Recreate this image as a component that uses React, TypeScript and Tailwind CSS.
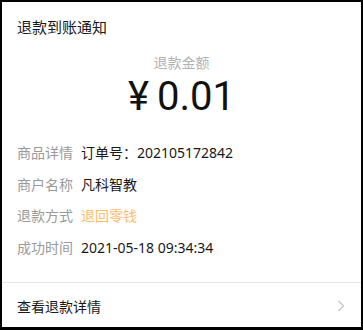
export default function App() {
  const rows = [
    { label: "商品详情", value: "订单号：202105172842", tone: "text-[#191919]" },
    { label: "商户名称", value: "凡科智教", tone: "text-[#191919]" },
    { label: "退款方式", value: "退回零钱", tone: "text-[#fbbd6a]" },
    { label: "成功时间", value: "2021-05-18 09:34:34", tone: "text-[#191919]" },
  ];

  return (
    <div className="w-[363px] h-[330px] bg-black pt-[2px] pl-[2px] pr-[2px] pb-[3px] font-['Noto_Sans','Noto_Sans_CJK_SC',sans-serif]">
      <div className="w-[359px] h-[325px] bg-white flex flex-col">
        <div className="mt-[15px] px-[15px] text-[15px] leading-[21px] text-[#191919]">退款到账通知</div>

        <div className="mt-[15px] text-center text-[14px] leading-[20px] text-[#b2b2b2]">退款金额</div>
        <div className="mt-[2px] text-center text-[40px] leading-[44px] text-[#111] font-['Roboto','Noto_Sans_CJK_SC',sans-serif]">
          ¥<span className="ml-[8px]">0.01</span>
        </div>

        {/* detail rows */}
        <div className="mt-[24px] px-[15px] flex flex-col gap-[11.7px]">
          {rows.map((r) => (
            <div key={r.label} className="flex gap-[8px] text-[14px] leading-[20px]">
              <span className="text-[#9a9a9a]">{r.label}</span>
              <span className={r.tone}>{r.value}</span>
            </div>
          ))}
        </div>

        <div className="mt-auto border-t border-[#e6e6e6] h-[45px] px-[15px] flex items-center justify-between">
          <span className="text-[14px] leading-[20px] text-[#191919] mt-[3px]">查看退款详情</span>
          <svg width="8" height="12" viewBox="0 0 8 12" className="mr-[1px] mt-[2px]">
            <path d="M1.5 1 L6.5 6 L1.5 11" fill="none" stroke="#c4c4c4" strokeWidth="1.3" />
          </svg>
        </div>
      </div>
    </div>
  );
}
